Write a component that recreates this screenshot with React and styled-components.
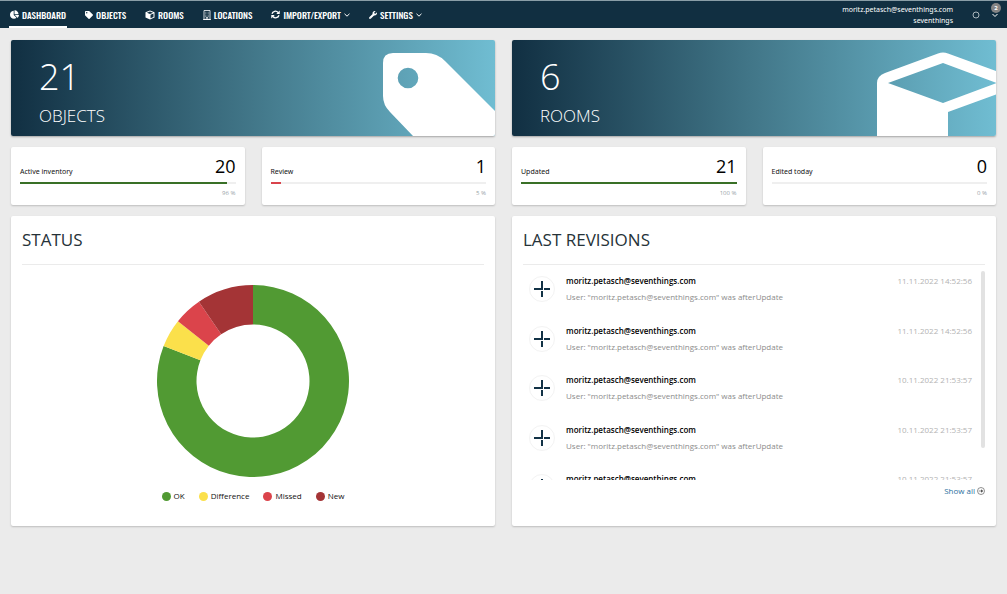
import React from "react";
import styled, { createGlobalStyle, css } from "styled-components";
import { FaChartPie, FaTag, FaWrench } from "react-icons/fa";

const GlobalStyle = createGlobalStyle`
  *, *::before, *::after { box-sizing: border-box; }
  body {
    margin: 0;
    background: #ebebeb;
    color: #111;
    font: 400 8px/12px "Open Sans", "Noto Sans", sans-serif;
  }
  h1, h2, p, ul, dl, dd { margin: 0; padding: 0; }
  button { font: inherit; color: inherit; background: none; border: 0; padding: 0; cursor: pointer; }
  a { text-decoration: none; color: inherit; }
  svg { display: block; flex: none; }
`;

const Header = styled.header`
  display: flex;
  justify-content: space-between;
  height: 28px;
  background: #112f41;
  border-top: 1px solid #8a9ea7;
  color: #fff;
`;

const Nav = styled.nav`
  display: flex;
  gap: 17px;
  padding-left: 9px;
`;

const navItem = css`
  display: flex;
  align-items: center;
  gap: 3px;
  height: 27px;
  padding: 0 1px;
  border-top: 2px solid transparent;
  border-bottom: 2px solid ${(p) => (p.$active ? "#fff" : "transparent")};
  color: #fff;
  font: 500 9px/12px Oswald, "Roboto Condensed", "Liberation Sans Narrow", "Open Sans Condensed", sans-serif;
  white-space: nowrap;
`;
const NavLink = styled.a`${navItem}`;
const NavButton = styled.button`&& { ${navItem} }`;

const Account = styled.div`
  display: flex;
  align-items: center;
  padding-right: 6px;
`;
const AccountText = styled.p`
  text-align: right;
  font: 400 7px/11px "Noto Sans", "Open Sans", sans-serif;
  padding-right: 19px;
`;
const IconButton = styled.button`
  position: relative;
  display: grid;
  place-items: center;
  height: 27px;
  width: ${(p) => p.$width};
`;
const Badge = styled.span`
  position: absolute;
  top: 2px;
  right: 0;
  width: 10px;
  height: 10px;
  border-radius: 50%;
  background: #858585;
  color: #fff;
  font-weight: 700;
  font-size: 6px;
  line-height: 10px;
  text-align: center;
`;

const Main = styled.main`
  display: grid;
  grid-template-columns: repeat(2, minmax(0, 1fr));
  gap: 17px;
  padding: 12px 11px;
`;
const Column = styled.section`
  display: flex;
  flex-direction: column;
  gap: 11px;
`;

const Banner = styled.a`
  display: flex;
  justify-content: space-between;
  height: 96px;
  overflow: hidden;
  border-radius: 2px;
  background: linear-gradient(90deg, #112f42, #427789 50%, #70bdd2);
  box-shadow: 0 1px 2px rgba(0, 0, 0, 0.3);
  color: #fff;
  font-weight: 300;
`;
const BannerText = styled.div`
  padding: 12px 0 0 28px;
`;
const BannerCount = styled.p`
  font-size: 36px;
  line-height: 50px;
`;
const BannerLabel = styled.p`
  font-size: 17px;
  line-height: 28px;
`;

const StatRow = styled.div`
  display: grid;
  grid-template-columns: 1fr 1fr;
  gap: 17px;
`;
const card = css`
  background: #fff;
  border-radius: 2px;
  box-shadow: 0 1px 2px rgba(0, 0, 0, 0.2);
`;
const StatCard = styled.article`
  ${card}
  height: 58px;
  padding: 8px 9px;
`;
const StatHead = styled.div`
  display: flex;
  justify-content: space-between;
  align-items: flex-end;
  height: 27px;
`;
const StatLabel = styled.span`
  font: 400 7px/12px "Noto Sans", "Open Sans", sans-serif;
  padding-bottom: 4px;
`;
const StatValue = styled.strong`
  font-size: 18px;
  line-height: 24px;
  padding-bottom: 4px;
  font-weight: 400;
  color: #000;
`;
const Track = styled.div`
  height: 2px;
  background: #efefef;
`;
const Fill = styled.div`
  height: 2px;
  background: ${(p) => p.$color};
`;
const Percent = styled.p`
  padding-top: 3px;
  text-align: right;
  color: #98a2a8;
  font-size: 6px;
`;

const Panel = styled.article`
  ${card}
  height: 310px;
  padding: 0 11px;
`;
const PanelTitle = styled.h2`
  height: 49px;
  padding-top: 12px;
  border-bottom: 1px solid #ebebeb;
  color: #263238;
  font-size: 17px;
  line-height: 24px;
  font-weight: 400;
`;
const Chart = styled.figure`
  display: flex;
  flex-direction: column;
  align-items: center;
  gap: 13px;
  margin: 0;
  padding-top: 20px;
`;
const Legend = styled.ul`
  display: flex;
  gap: 14px;
  list-style: none;
`;
const LegendItem = styled.li`
  display: flex;
  align-items: center;
  gap: 3px;
  &::before {
    content: "";
    width: 9px;
    height: 9px;
    border-radius: 50%;
    background: ${(p) => p.$color};
  }
`;

const Scroller = styled.div`
  display: flex;
  justify-content: space-between;
  align-items: flex-start;
  height: 215px;
  padding-top: 6px;
  margin-bottom: 5px;
  overflow: hidden;
`;
const RevisionList = styled.ul`
  flex: 1;
  display: grid;
  grid-auto-rows: 1fr;
  height: 248px;
  list-style: none;
`;
const Revision = styled.li`
  display: grid;
  grid-template-columns: 26px 1fr auto;
  column-gap: 11px;
  align-items: start;
  padding: 4px 9px 0 6px;
`;
const Avatar = styled.span`
  display: grid;
  place-items: center;
  width: 26px;
  height: 26px;
  margin-top: 1px;
  border: 1px solid #f3f3f3;
  border-radius: 50%;
`;
const RevisionUser = styled.p`
  color: #000;
  font-weight: 600;
`;
const RevisionNote = styled.p`
  padding-top: 4px;
  color: #8c8c8c;
`;
const RevisionTime = styled.time`
  color: #b3b3b3;
`;
const ScrollThumb = styled.div`
  width: 4px;
  height: 177px;
  border-radius: 2px;
  background: #e2e2e2;
`;
const ShowAll = styled.a`
  display: flex;
  align-items: center;
  justify-content: flex-end;
  gap: 2px;
  color: #2b6f9e;
`;

const ChevronDown = ({ size = 6 }) => (
  <svg width={size} height={size} viewBox="0 0 6 6" fill="none" stroke="currentColor" strokeWidth="1">
    <path d="M.5 1.8 3 4.2 5.5 1.8" />
  </svg>
);
const CubeIcon = () => (
  <svg width="10" height="10" viewBox="0 0 20 20">
    <path fill="currentColor" fillRule="evenodd" d="M10 1 19 4.4V15L10 19 1 15V4.4ZM10 3 3.8 5.4 10 7.8 16.2 5.4ZM11 9.6V16.4L17 13.8V7.2Z" />
  </svg>
);
const BuildingIcon = () => (
  <svg width="8" height="10" viewBox="0 0 16 20" fill="none" stroke="currentColor">
    <path strokeWidth="1.6" d="M2 1H14V19H2ZM0 19H16M6.5 19V15H9.5V19" />
    <path strokeWidth="1.6" opacity=".65" strokeDasharray="1.6 1.2" d="M4.4 4.5H12M4.4 7.5H12M4.4 10.5H12M4.4 13H12" />
  </svg>
);
const RefreshIcon = () => (
  <svg width="9" height="9" viewBox="0 0 18 18" fill="none" stroke="currentColor" strokeWidth="2.6">
    <path d="M2 7.5C3.5 1.8 10.5.8 14.3 5M16 10.5C14.5 16.2 7.5 17.2 3.7 13" />
    <path fill="currentColor" stroke="none" d="M17.5 1V8H10.5ZM.5 17V10H7.5Z" />
  </svg>
);
const ArrowCircle = () => (
  <svg width="8" height="8" viewBox="0 0 16 16" fill="none" stroke="#555" strokeWidth="1.3">
    <circle cx="8" cy="8" r="7" />
    <path d="M3.5 8H11.5" />
    <path fill="#555" stroke="none" d="M8 4.5 12.5 8 8 11.5Z" />
  </svg>
);
const PlusMark = () => (
  <svg width="18" height="18" viewBox="0 0 18 18" stroke="#123246" strokeWidth="2" fill="none">
    <path d="M9 1V9H1M11 9H17M9 11V17" />
  </svg>
);
const TagArt = () => (
  <svg width="113" height="96" viewBox="0 0 113 96">
    <path
      fill="#fff"
      fillRule="evenodd"
      d="M1 23Q1 13 11 13H44Q55 13 63 21L113 71V96H31L8 72Q1 65 1 56ZM15.7 38a10.3 10.3 0 1 0 20.6 0a10.3 10.3 0 1 0-20.6 0Z"
    />
  </svg>
);
const BoxArt = () => (
  <svg width="119" height="96" viewBox="0 0 119 96">
    <path
      fill="#fff"
      fillRule="evenodd"
      d="M0 96V43Q0 36 8 33L61 13.4Q66 11.4 71 13.4L119 31V54.4L71 72V96ZM11 43 66 23 120 43 66 63Z"
    />
  </svg>
);

const statuses = [
  { label: "OK", count: 17, color: "#519a33" },
  { label: "Difference", count: 1, color: "#fbe04b" },
  { label: "Missed", count: 1, color: "#db444b" },
  { label: "New", count: 2, color: "#a43436" },
];

function Donut({ data }) {
  const total = data.reduce((sum, d) => sum + d.count, 0);
  const point = (r, turn) => {
    const a = turn * 2 * Math.PI;
    return `${96 + r * Math.sin(a)} ${96 - r * Math.cos(a)}`;
  };
  let start = 0;
  return (
    <svg width="192" height="192" viewBox="0 0 192 192" role="img" aria-label="Status">
      {data.map((d) => {
        const from = start / total;
        start += d.count;
        const to = start / total;
        const large = to - from > 0.5 ? 1 : 0;
        return (
          <path
            key={d.label}
            fill={d.color}
            d={`M${point(96, from)}A96 96 0 ${large} 1 ${point(96, to)}L${point(56.5, to)}A56.5 56.5 0 ${large} 0 ${point(56.5, from)}Z`}
          />
        );
      })}
    </svg>
  );
}

function Stat({ label, value, percent, color = "#397026" }) {
  return (
    <StatCard>
      <StatHead>
        <StatLabel>{label}</StatLabel>
        <StatValue>{value}</StatValue>
      </StatHead>
      <Track>
        <Fill $color={color} style={{ width: `${percent}%` }} />
      </Track>
      <Percent>{percent} %</Percent>
    </StatCard>
  );
}

const revisionTimes = [
  "11.11.2022 14:52:56",
  "11.11.2022 14:52:56",
  "10.11.2022 21:53:57",
  "10.11.2022 21:53:57",
  "10.11.2022 21:53:57",
];

export default function App() {
  return (
    <>
      <GlobalStyle />
      <Header>
        <Nav>
          <NavLink href="#dashboard" $active><FaChartPie size={9} />DASHBOARD</NavLink>
          <NavLink href="#objects"><FaTag size={8} />OBJECTS</NavLink>
          <NavLink href="#rooms"><CubeIcon />ROOMS</NavLink>
          <NavLink href="#locations"><BuildingIcon />LOCATIONS</NavLink>
          <NavButton type="button"><RefreshIcon />IMPORT/EXPORT<ChevronDown /></NavButton>
          <NavButton type="button"><FaWrench size={8} />SETTINGS<ChevronDown /></NavButton>
        </Nav>
        <Account>
          <AccountText>
            moritz.petasch@seventhings.com
            <br />
            seventhings
          </AccountText>
          <IconButton type="button" aria-label="Activity" $width="8px">
            <svg width="8" height="8" viewBox="0 0 8 8" fill="none" stroke="#b9c4ca" strokeWidth=".9">
              <circle cx="4" cy="4" r="3" />
            </svg>
          </IconButton>
          <IconButton type="button" aria-label="Notifications" $width="21px">
            <Badge>2</Badge>
            <svg width="21" height="8" viewBox="0 0 21 8" fill="none" stroke="#fff">
              <path d="M12.5 3 15 5.5 17.5 3" />
            </svg>
          </IconButton>
        </Account>
      </Header>
      <Main>
        <Column>
          <Banner href="#objects">
            <BannerText>
              <BannerCount>21</BannerCount>
              <BannerLabel>OBJECTS</BannerLabel>
            </BannerText>
            <TagArt />
          </Banner>
          <StatRow>
            <Stat label="Active inventory" value="20" percent={96} />
            <Stat label="Review" value="1" percent={5} color="#d9434c" />
          </StatRow>
          <Panel>
            <PanelTitle>STATUS</PanelTitle>
            <Chart>
              <Donut data={statuses} />
              <Legend>
                {statuses.map((s) => (
                  <LegendItem key={s.label} $color={s.color}>{s.label}</LegendItem>
                ))}
              </Legend>
            </Chart>
          </Panel>
        </Column>
        <Column>
          <Banner href="#rooms">
            <BannerText>
              <BannerCount>6</BannerCount>
              <BannerLabel>ROOMS</BannerLabel>
            </BannerText>
            <BoxArt />
          </Banner>
          <StatRow>
            <Stat label="Updated" value="21" percent={100} />
            <Stat label="Edited today" value="0" percent={0} />
          </StatRow>
          <Panel>
            <PanelTitle>LAST REVISIONS</PanelTitle>
            <Scroller>
              <RevisionList>
                {revisionTimes.map((time, i) => (
                  <Revision key={i}>
                    <Avatar><PlusMark /></Avatar>
                    <div>
                      <RevisionUser>moritz.petasch@seventhings.com</RevisionUser>
                      <RevisionNote>User: "moritz.petasch@seventhings.com" was afterUpdate</RevisionNote>
                    </div>
                    <RevisionTime>{time}</RevisionTime>
                  </Revision>
                ))}
              </RevisionList>
              <ScrollThumb />
            </Scroller>
            <ShowAll href="#revisions">Show all <ArrowCircle /></ShowAll>
          </Panel>
        </Column>
      </Main>
    </>
  );
}
